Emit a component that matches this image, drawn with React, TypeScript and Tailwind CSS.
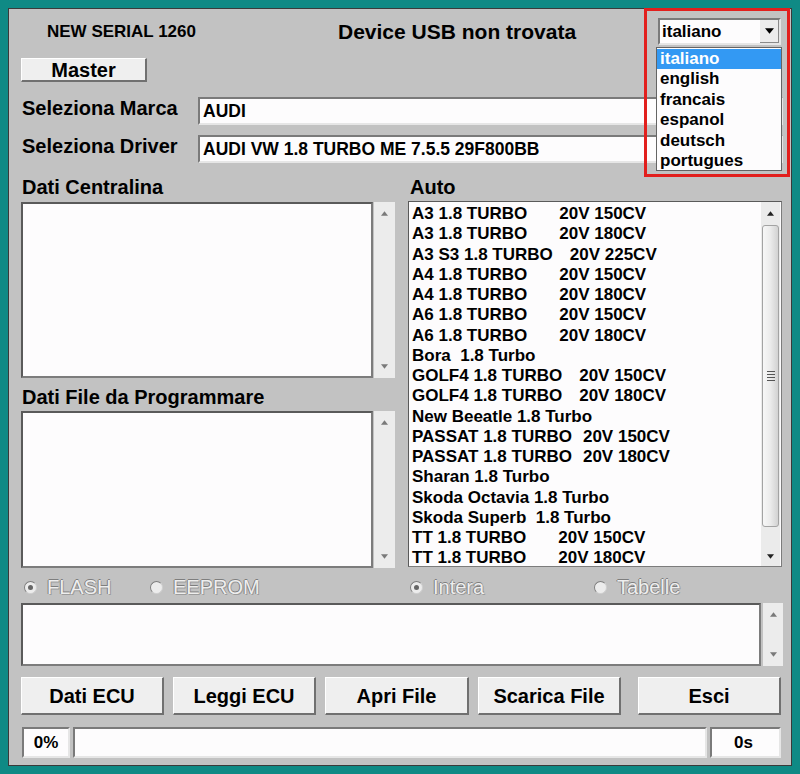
import React from 'react';

// elenco vetture (prima parte, spaziatura, seconda parte)
const vetture: [string, string, string][] = [
  ['A3 1.8 TURBO', 'ml-[32px]', '20V 150CV'],
  ['A3 1.8 TURBO', 'ml-[32px]', '20V 180CV'],
  ['A3 S3 1.8 TURBO', 'ml-[17px]', '20V 225CV'],
  ['A4 1.8 TURBO', 'ml-[32px]', '20V 150CV'],
  ['A4 1.8 TURBO', 'ml-[32px]', '20V 180CV'],
  ['A6 1.8 TURBO', 'ml-[32px]', '20V 150CV'],
  ['A6 1.8 TURBO', 'ml-[32px]', '20V 180CV'],
  ['Bora  1.8 Turbo', '', ''],
  ['GOLF4 1.8 TURBO', 'ml-[17px]', '20V 150CV'],
  ['GOLF4 1.8 TURBO', 'ml-[17px]', '20V 180CV'],
  ['New Beeatle 1.8 Turbo', '', ''],
  ['PASSAT 1.8 TURBO', 'ml-[11px]', '20V 150CV'],
  ['PASSAT 1.8 TURBO', 'ml-[11px]', '20V 180CV'],
  ['Sharan 1.8 Turbo', '', ''],
  ['Skoda Octavia 1.8 Turbo', '', ''],
  ['Skoda Superb  1.8 Turbo', '', ''],
  ['TT 1.8 TURBO', 'ml-[32px]', '20V 150CV'],
  ['TT 1.8 TURBO', 'ml-[32px]', '20V 180CV'],
];

const lingue = ['italiano', 'english', 'francais', 'espanol', 'deutsch', 'portugues'];

const Tri = ({ up = false, color = '#7a7a7a', w = 7 }: { up?: boolean; color?: string; w?: number }) => (
  <svg width={w} height={Math.ceil(w / 2) + 1} viewBox="0 0 8 5">
    <polygon points={up ? '0,5 8,5 4,0' : '0,0 8,0 4,5'} fill={color} />
  </svg>
);

const MiniScroll = () => (
  <div className="w-[21px] h-full bg-[#ececec] flex flex-col justify-between items-center pt-[9px] pb-[9px]">
    <Tri up />
    <Tri />
  </div>
);

const boxCls = 'bg-[#fdfcfd] border-2 border-t-[#5a5a5a] border-l-[#5a5a5a] border-r-[#7c7c7c] border-b-[#7c7c7c]';
const insetCls = 'bg-[#fdfcfd] border-2 border-t-[#7a7a7a] border-l-[#7a7a7a] border-r-[#e6e6e6] border-b-[#e6e6e6]';
const btnCls =
  'h-full bg-[#efefef] border-t border-l border-t-white border-l-white border-r-2 border-b-2 border-r-[#707070] border-b-[#707070] text-[20px] font-bold flex items-center justify-center';
const disabledTxt =
  'text-[20px] text-[#eeeeee] [text-shadow:-1px_0_0_#7e7e7e,0_-1px_0_#7e7e7e,1px_1px_0_#9c9c9c]';

const Radio = ({ on, label, w }: { on: boolean; label: string; w: string }) => (
  <div className={`flex items-center ${w}`}>
    <div className="w-[13px] h-[13px] rounded-full bg-[#ececec] border border-t-[#7e7e7e] border-l-[#7e7e7e] border-r-[#cfcfcf] border-b-[#cfcfcf] flex items-center justify-center">
      {on && <div className="w-[5px] h-[5px] rounded-full bg-[#666]" />}
    </div>
    <span className={`ml-[10px] ${disabledTxt}`}>{label}</span>
  </div>
);

export default function App() {
  return (
    <div className="relative w-[800px] h-[774px] bg-[#0f8a85] p-[8px] font-['Liberation_Sans',Arial,sans-serif] text-black">
      <div className="w-full h-full bg-[#c2c2c2] border border-[#3a3a3a] pl-[12px] pr-[8px] pt-[9px] flex flex-col">
        {/* intestazione */}
        <div className="flex items-center h-[27px]">
          <div className="w-[317px] pl-[26px] text-[17px] font-bold">NEW SERIAL 1260</div>
          <div className="text-[21px] font-bold">Device USB non trovata</div>
          <div className={`ml-auto mr-[2px] w-[123px] h-[27px] flex items-center ${insetCls}`}>
            <span className="flex-1 pl-[2px] text-[17px] font-bold">italiano</span>
            <div className="w-[19px] h-[23px] bg-[#ececec] border-r border-b border-r-[#8a8a8a] border-b-[#8a8a8a] flex items-center justify-center">
              <Tri color="#000" w={9} />
            </div>
          </div>
        </div>

        <div className="mt-[13px] w-[126px] h-[24px]">
          <div className={`${btnCls} text-[17px]`}>Master</div>
        </div>

        <div className="mt-[15px] flex items-center h-[28px]">
          <div className="w-[177px] pl-[1px] pb-[6px] text-[20px] font-bold">Seleziona Marca</div>
          <div className={`flex-1 h-full flex items-center pl-[3px] text-[17.5px] font-bold ${insetCls}`}>AUDI</div>
        </div>
        <div className="mt-[10px] flex items-center h-[28px]">
          <div className="w-[177px] pl-[1px] pb-[6px] text-[20px] font-bold">Seleziona Driver</div>
          <div className={`flex-1 h-full flex items-center pl-[3px] text-[17.5px] font-bold ${insetCls}`}>
            AUDI VW 1.8 TURBO ME 7.5.5 29F800BB
          </div>
        </div>

        {/* colonne */}
        <div className="mt-[12px] flex gap-[13px]">
          <div className="w-[374px] flex flex-col">
            <div className="h-[24px] leading-[24px] pl-[1px] text-[20px] font-bold">Dati Centralina</div>
            <div className="mt-[3px] h-[176px] flex gap-[1px]">
              <div className={`w-[352px] h-full ${boxCls}`} />
              <MiniScroll />
            </div>
            <div className="mt-[7px] h-[24px] leading-[24px] pl-[1px] text-[20px] font-bold">Dati File da Programmare</div>
            <div className="mt-[2px] h-[157px] flex gap-[1px]">
              <div className={`w-[352px] h-full ${boxCls}`} />
              <MiniScroll />
            </div>
          </div>

          <div className="w-[374px] flex flex-col">
            <div className="h-[24px] leading-[24px] pl-[2px] text-[20px] font-bold">Auto</div>
            <div className={`mt-[2px] h-[366px] flex ${boxCls} border-[1.5px]`}>
              <div className="flex-1 pl-[3px] pt-[2px] text-[17px] font-bold">
                {vetture.map(([a, gap, b], i) => (
                  <div key={i} className="h-[20.25px] leading-[20.25px] whitespace-pre">
                    {a}
                    {b && <span className={`inline-block ${gap}`}>{b}</span>}
                  </div>
                ))}
              </div>
              <div className="w-[19px] mr-[1px] h-full bg-[#ebebeb] flex flex-col">
                <div className="h-[22px] flex items-center justify-center">
                  <Tri up color="#222" />
                </div>
                <div className="mt-[1px] h-[302px] mx-[1px] rounded-[3px] border border-[#a3a3a3] bg-gradient-to-r from-[#f7f7f7] via-[#ebebeb] to-[#d2d2d2] flex flex-col items-center justify-center gap-[2px]">
                  <div className="w-[8px] h-[1px] bg-[#555]" />
                  <div className="w-[8px] h-[1px] bg-[#555]" />
                  <div className="w-[8px] h-[1px] bg-[#555]" />
                  <div className="w-[8px] h-[1px] bg-[#555]" />
                </div>
                <div className="flex-1" />
                <div className="h-[20px] flex items-center justify-center">
                  <Tri color="#222" />
                </div>
              </div>
            </div>
          </div>
        </div>

        {/* opzioni */}
        <div className="mt-[9px] h-[20px] flex items-center pl-[3px]">
          <Radio on label="FLASH" w="w-[126px]" />
          <Radio on={false} label="EEPROM" w="w-[260px]" />
          <Radio on label="Intera" w="w-[184px]" />
          <Radio on={false} label="Tabelle" w="w-[120px]" />
        </div>

        <div className="mt-[6px] h-[63px] flex gap-[2px]">
          <div className={`flex-1 h-full ${boxCls}`} />
          <div className="w-[20px] h-full bg-[#ececec] flex flex-col justify-between items-center pt-[9px] pb-[9px]">
            <Tri up />
            <Tri />
          </div>
        </div>

        {/* pulsanti */}
        <div className="mt-[11px] h-[38px] flex">
          <div className={`w-[143px] ${btnCls}`}>Dati ECU</div>
          <div className={`ml-[9px] w-[143px] ${btnCls}`}>Leggi ECU</div>
          <div className={`ml-[9px] w-[144px] ${btnCls}`}>Apri File</div>
          <div className={`ml-[9px] w-[143px] ${btnCls}`}>Scarica File</div>
          <div className={`ml-[17px] w-[143px] ${btnCls}`}>Esci</div>
        </div>

        {/* stato */}
        <div className="mt-[12px] h-[31px] flex pl-[1px]">
          <div className={`w-[48px] h-full flex items-center justify-center text-[17px] font-bold ${insetCls}`}>0%</div>
          <div className={`ml-[3px] w-[634px] h-full ${insetCls}`} />
          <div className={`ml-[3px] w-[71px] h-full flex items-center justify-end pr-[26px] text-[17px] font-bold ${insetCls}`}>0s</div>
        </div>
      </div>

      {/* menu lingua aperto */}
      <div className="absolute left-[656px] top-[47px] w-[126px] h-[124px] bg-[#fdfcfd] border border-[#646464]">
        {lingue.map((l, i) => (
          <div
            key={l}
            className={`h-[20.4px] leading-[20.4px] pl-[3px] text-[17px] font-bold ${i === 0 ? 'mt-[1px] bg-[#3399f3] text-white' : ''}`}
          >
            {l}
          </div>
        ))}
      </div>
      <div className="absolute left-[644px] top-[8px] w-[146px] h-[169px] border-[3px] border-[#e21f1d]" />
    </div>
  );
}
